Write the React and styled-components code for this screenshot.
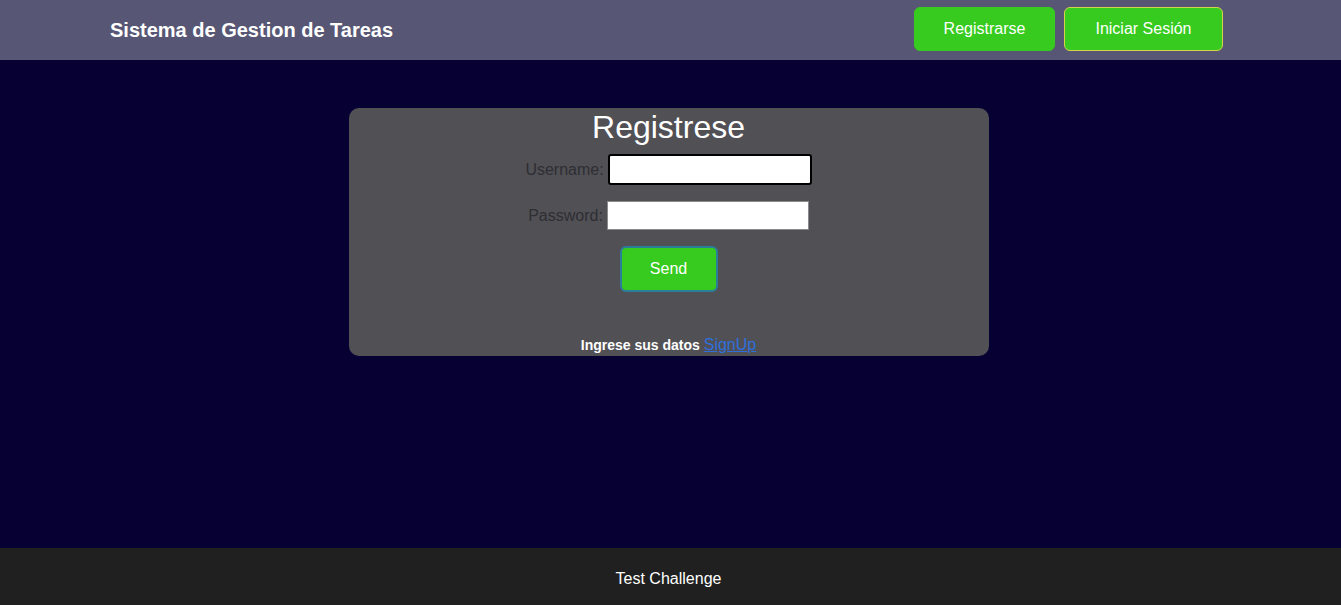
import React from 'react';
import styled, { createGlobalStyle } from 'styled-components';

const green = '#36cb1e';
const headerBg = '#575775';
const pageBg = '#070033';
const cardBg = '#515055';
const footerBg = '#202020';

const GlobalStyle = createGlobalStyle`
  html, body {
    margin: 0;
    padding: 0;
    background: ${pageBg};
    font-family: "Liberation Sans", Arial, sans-serif;
  }
  * { box-sizing: border-box; }
`;

const Page = styled.div`
  display: flex;
  flex-direction: column;
  min-height: 100vh;
`;

const Header = styled.header`
  height: 60px;
  background: ${headerBg};
  display: flex;
  align-items: center;
  justify-content: space-between;
  padding: 0 118px 0 110px;
`;

const Brand = styled.h1`
  margin: 0;
  font-size: 20px;
  font-weight: 700;
  color: #fff;
`;

const Nav = styled.nav`
  display: flex;
  gap: 9px;
  margin-top: -3px;
`;

const NavButton = styled.button`
  height: 44px;
  width: ${(p) => p.w}px;
  background: ${green};
  color: #fff;
  font-family: inherit;
  font-size: 16px;
  border: 1px solid ${(p) => (p.outlined ? '#d6d34a' : green)};
  border-radius: 6px;
  cursor: pointer;
`;

const Main = styled.main`
  flex: 1;
  display: flex;
  justify-content: center;
  align-items: flex-start;
  padding: 48px 4px 0 0;
`;

const Card = styled.section`
  width: 640px;
  height: 248px;
  background: ${cardBg};
  border-radius: 10px;
  display: flex;
  flex-direction: column;
  align-items: center;
`;

const Title = styled.h2`
  margin: 0;
  font-size: 32px;
  font-weight: 400;
  line-height: 38px;
  color: #fff;
`;

const Form = styled.form`
  display: flex;
  flex-direction: column;
  align-items: center;
  gap: 16px;
  margin-top: 8px;
`;

const Row = styled.div`
  display: flex;
  align-items: center;
  gap: 4px;
`;

const Label = styled.label`
  font-size: 16px;
  color: #2e2e33;
`;

const Input = styled.input`
  width: ${(p) => (p.focused ? 204 : 202)}px;
  height: ${(p) => (p.focused ? 31 : 29)}px;
  background: #fff;
  border: ${(p) => (p.focused ? '2px solid #000' : '1px solid #8a8a8a')};
  border-radius: ${(p) => (p.focused ? '3px' : '0')};
  box-shadow: ${(p) => (p.focused ? 'inset 0 0 0 1px #fff' : 'none')};
  outline: none;
  padding: 0 4px;
  font-size: 14px;
`;

const SendButton = styled.button`
  width: 98px;
  height: 46px;
  background: ${green};
  color: #fff;
  font-family: inherit;
  font-size: 16px;
  border: 2px solid #2a7e9a;
  border-radius: 6px;
  cursor: pointer;
`;

const Note = styled.p`
  margin: auto 0 2px;
  font-size: 14px;
  font-weight: 700;
  color: #fff;

  a {
    font-size: 16px;
    font-weight: 400;
    color: #2f6fdc;
    text-decoration: underline;
  }
`;

const Footer = styled.footer`
  height: 57px;
  background: ${footerBg};
  display: flex;
  align-items: center;
  justify-content: center;
  padding: 5px 4px 0 0;
  color: #fff;
  font-size: 16px;
`;

const App = () => {
  return (
    <Page>
      <GlobalStyle />
      <Header>
        <Brand>Sistema de Gestion de Tareas</Brand>
        <Nav>
          <NavButton w={141}>Registrarse</NavButton>
          <NavButton w={159} outlined>Iniciar Sesión</NavButton>
        </Nav>
      </Header>
      <Main>
        <Card>
          <Title>Registrese</Title>
          <Form onSubmit={(e) => e.preventDefault()}>
            <Row>
              <Label htmlFor="username">Username:</Label>
              <Input id="username" type="text" focused />
            </Row>
            <Row>
              <Label htmlFor="password">Password:</Label>
              <Input id="password" type="password" />
            </Row>
            <SendButton type="submit">Send</SendButton>
          </Form>
          <Note>
            Ingrese sus datos <a href="#signup">SignUp</a>
          </Note>
        </Card>
      </Main>
      <Footer>Test Challenge</Footer>
    </Page>
  );
};

export default App;
